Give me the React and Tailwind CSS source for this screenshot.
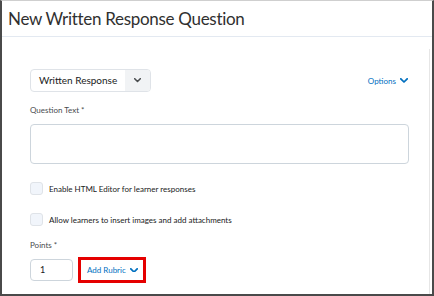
import React from "react";

function Chevron({ className = "", color = "#006fbf", w = 9 }) {
  return (
    <svg width={w} height={w * 0.6} viewBox="0 0 10 6" className={className}>
      <path d="M1 1 L5 5 L9 1" fill="none" stroke={color} strokeWidth="2.2" strokeLinecap="round" strokeLinejoin="round" />
    </svg>
  );
}

export default function App() {
  return (
    <div className="w-[434px] h-[296px] bg-white border-t border-t-[#cfcfcf] border-l-2 border-r-2 border-b-2 border-[#4a4a4a] flex flex-col overflow-hidden" style={{ fontFamily: "Lato, 'Open Sans', sans-serif" }}>
      <div className="h-[36px] border-b border-[#e3e9f1] flex items-center pl-[6px]">
        <h1 className="text-[17px] tracking-[-0.3px] text-[#303030] leading-none font-normal">New Written Response Question</h1>
      </div>
      <div className="flex-1 flex">
        <div className="flex-1 pl-[28px] pr-[20px] pt-[32px]">
          <div className="flex items-center justify-between">
            <div className="w-[121px] h-[23px] border border-[#dfe3e8] rounded-[4px] flex overflow-hidden">
              <div className="flex-1 flex items-center pl-[8px] text-[10px] text-[#202122]">Written Response</div>
              <div className="w-[25px] bg-[#f1f3f5] flex items-center justify-center">
                <Chevron color="#494c4e" w={7} />
              </div>
            </div>
            <div className="flex items-center gap-[4px] text-[8px] text-[#006fbf] mr-[1px]">
              <span>Options</span>
              <Chevron w={8} />
            </div>
          </div>
          <div className="mt-[13px] text-[8px] text-[#494c4e] leading-[10px]">Question Text *</div>
          <div className="mt-[9px] h-[40px] border border-[#cdd5dc] rounded-[4px]"></div>
          <div className="mt-[18px] flex items-center gap-[6px]">
            <div className="w-[13px] h-[13px] border border-[#dfe3e8] bg-[#f1f5fb] rounded-[3px]"></div>
            <span className="text-[8px] leading-[10px] text-[#202122]">Enable HTML Editor for learner responses</span>
          </div>
          <div className="mt-[18px] flex items-center gap-[6px]">
            <div className="w-[13px] h-[13px] border border-[#dfe3e8] bg-[#f1f5fb] rounded-[3px]"></div>
            <span className="text-[8px] leading-[10px] text-[#202122]">Allow learners to insert images and add attachments</span>
          </div>
          <div className="mt-[14px] text-[8px] text-[#494c4e] leading-[10px]">Points *</div>
          <div className="mt-[7px] flex items-center">
            <div className="w-[43px] h-[22px] border border-[#cdd5dc] rounded-[4px] flex items-center pl-[9px] text-[9px] text-[#202122]">1</div>
            <div className="ml-[5px] w-[68px] h-[26px] border-[3px] border-[#e50000] flex items-center pl-[6px] gap-[4px] text-[8px] text-[#006fbf] whitespace-nowrap">
              <span>Add Rubric</span>
              <Chevron w={8} />
            </div>
          </div>
        </div>
        <div className="w-[3px] mt-[12px] border-l border-[#e6e6e6]"></div>
      </div>
    </div>
  );
}
